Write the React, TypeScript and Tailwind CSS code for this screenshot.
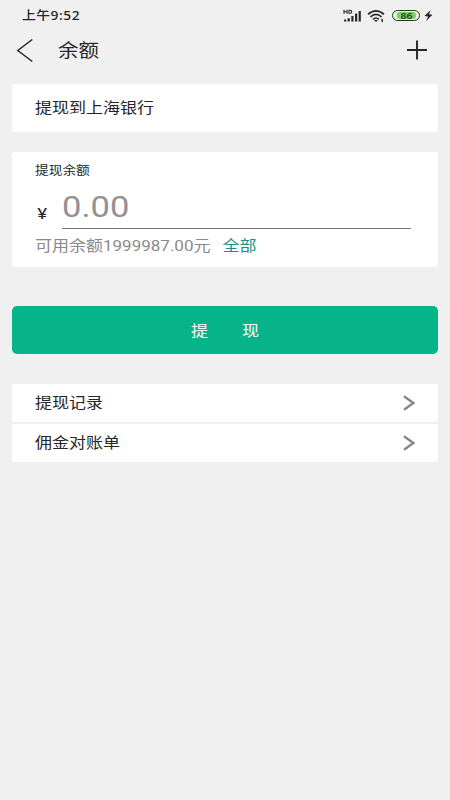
const StatusBar = () => (
  <div className="flex h-[31px] items-center pl-[22px] pr-[17px] text-[#262626]">
    <span className="origin-center scale-y-[0.9] font-['Noto_Sans','Noto_Sans_CJK_SC',sans-serif] text-[13.8px] font-medium tracking-[0.5px]">
      上午9:52
    </span>
    <div className="ml-auto flex items-center">
      {/* signal */}
      <svg width="19" height="14" viewBox="0 0 19 14" className="mr-[5px]" fill="none" stroke="currentColor">
        <path d="M1 .8v4M4 .8v4M1 2.8h3M6 1.3v3h1.2q1.5 0 1.5-1.5T7.2 1.3z" strokeWidth="1.1" />
        <path d="M2.2 12.5v-2M5.7 12.5V9.3M9.4 12.5V6.9M13.1 12.5V4.4M16.7 12.5V2" strokeWidth="2.2" />
      </svg>
      {/* wifi */}
      <svg width="18" height="14" viewBox="0 0 18 14" className="mr-[7px]" fill="none" stroke="currentColor">
        <path d="M1 5.4Q9-1.6 17 5.4" strokeWidth="1.7" />
        <path d="M3.4 7.9Q9 3 14.6 7.9" strokeWidth="1.7" />
        <path d="M6 10.3Q9 7.7 12 10.3" strokeWidth="1.6" />
        <path d="M7 11h4L9 13z" fill="currentColor" stroke="none" />
        <path d="M15.2 9.8v3.2" strokeWidth="1.4" />
      </svg>
      <div className="mr-[4px] flex h-[11px] w-7 items-center justify-center rounded-full border-[1.5px] border-[#263c22] bg-[#e2f5dc] p-px">
        <div className="flex h-full w-[19px] items-center justify-center rounded-[3px] bg-[#80cc6c]">
          <span className="scale-x-110 font-['Noto_Sans',sans-serif] text-[9.5px] leading-none font-semibold text-[#20401a]">86</span>
        </div>
      </div>
      <svg width="9" height="11" viewBox="0 0 9 11" fill="currentColor">
        <path d="M6.7 0 .5 6.1 4 6.5 2 11 8.5 4.7 5 4.3z" />
      </svg>
    </div>
  </div>
);

const Header = () => (
  <header className="flex h-[38px] items-center pl-4 pr-[22px] text-[#262626]">
    <svg width="18" height="26" viewBox="0 0 18 26" fill="none" stroke="currentColor" strokeWidth="1.5">
      <path d="M16.3 2.5 1.8 13.5l14.5 11" />
    </svg>
    <h1 className="ml-6 translate-y-px scale-y-[0.88] text-[20.5px] leading-6">余额</h1>
    <svg width="22" height="22" viewBox="0 0 22 22" className="ml-auto" fill="none" stroke="currentColor" strokeWidth="1.9">
      <path d="M11 1.5v19M1 11h20" />
    </svg>
  </header>
);

const LinkRow = ({ label }: { label: string }) => (
  <div className="flex h-[38px] items-center rounded-[3px] bg-white pl-[23px] pr-[22px]">
    <span className="scale-y-[0.88] text-[17px] leading-6 text-[#262626]">{label}</span>
    <svg width="14" height="16" viewBox="0 0 14 16" className="ml-auto" fill="none" stroke="#888" strokeWidth="2.4">
      <path d="M2 1.2 11.4 8 2 14.8" />
    </svg>
  </div>
);

export default function App() {
  return (
    <div className="min-h-screen bg-[#f0f0f0] font-['Roboto','Noto_Sans_CJK_SC',sans-serif]">
      <StatusBar />
      <Header />

      <main className="px-3 pt-[14.5px]">
        <section className="flex h-12 items-center rounded-[4px] bg-white px-[23px]">
          <span className="scale-y-[0.88] text-[17px] leading-6 text-[#262626]">提现到上海银行</span>
        </section>

        <section className="mt-5 h-[115.5px] rounded-[4px] bg-white pl-[23px] pr-[27px] pt-[9px]">
          <p className="scale-y-[0.88] text-[13.7px] leading-5 text-[#262626]">提现余额</p>
          <div className="flex h-12 items-end">
            <span className="mb-[3px] w-[27px] origin-left scale-x-110 scale-y-[0.88] pl-[2px] text-[17px] leading-6 text-[#262626]">¥</span>
            <div className="flex h-[43px] flex-1 items-center border-b border-[#777]">
              <span className="-translate-y-px scale-y-[0.88] text-[34.5px] leading-10 text-[#929292]">0.00</span>
            </div>
          </div>
          <div className="mt-[5px] flex gap-3 text-[17px] leading-6">
            <span className="scale-y-[0.88] text-[#8a8a8a]">可用余额1999987.00元</span>
            <span className="scale-y-[0.88] text-[#14917f]">全部</span>
          </div>
        </section>

        <button className="mt-[39px] flex h-12 w-full items-center justify-center gap-[34px] rounded-[5px] bg-[#07b388] pt-[3px] text-[17px] text-white">
          <span className="scale-y-[0.88]">提</span>
          <span className="scale-y-[0.88]">现</span>
        </button>

        <div className="mt-[30px] flex flex-col gap-[1.5px]">
          <LinkRow label="提现记录" />
          <LinkRow label="佣金对账单" />
        </div>
      </main>
    </div>
  );
}
